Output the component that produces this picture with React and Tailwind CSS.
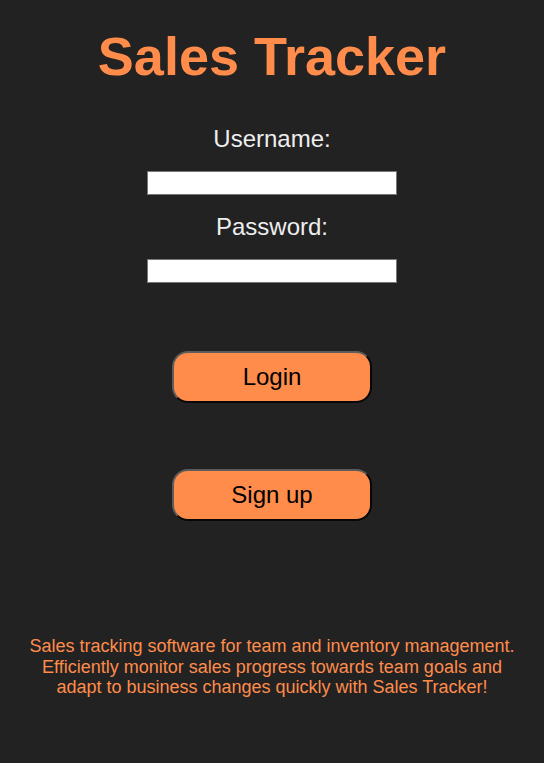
import React from 'react';

const font = { fontFamily: '"Liberation Sans", Arial, sans-serif' };

const Field = ({ label, type, first }) => (
  <div className={`flex flex-col items-center ${first ? '' : 'mt-[18px]'}`}>
    <label className="text-[24px] leading-[28px] text-[#eeeeee]">{label}</label>
    <input
      type={type}
      className="mt-[18px] w-[250px] h-[24px] bg-white border border-[#767676] outline-none px-1 text-black"
    />
  </div>
);

const App = () => {
  return (
    <div
      className="min-h-screen bg-[#222222] flex flex-col items-center pt-[26px] font-['Liberation_Sans',Arial,sans-serif]"
      style={font}
    >
      <h1 className="text-[54px] leading-[61px] font-bold text-[#ff8c4b]">Sales Tracker</h1>

      <form className="mt-[38px] flex flex-col items-center" onSubmit={(e) => e.preventDefault()}>
        <Field label="Username:" type="text" first />
        <Field label="Password:" type="password" />

        <button
          type="submit"
          className="mt-[68px] w-[200px] h-[52px] rounded-[16px] bg-[#ff8c4b] text-black text-[24px] border-2 [border-style:outset] border-[#5c5c5c]"
        >
          Login
        </button>
        <button
          type="button"
          className="mt-[66px] w-[200px] h-[52px] rounded-[16px] bg-[#ff8c4b] text-black text-[24px] border-2 [border-style:outset] border-[#5c5c5c]"
        >
          Sign up
        </button>
      </form>

      <p className="mt-[115px] px-6 text-center text-[18px] leading-[20.7px] text-[#ff8c4b]">
        Sales tracking software for team and inventory management.
        <br />
        Efficiently monitor sales progress towards team goals and
        <br />
        adapt to business changes quickly with Sales Tracker!
      </p>
    </div>
  );
};

export default App;
